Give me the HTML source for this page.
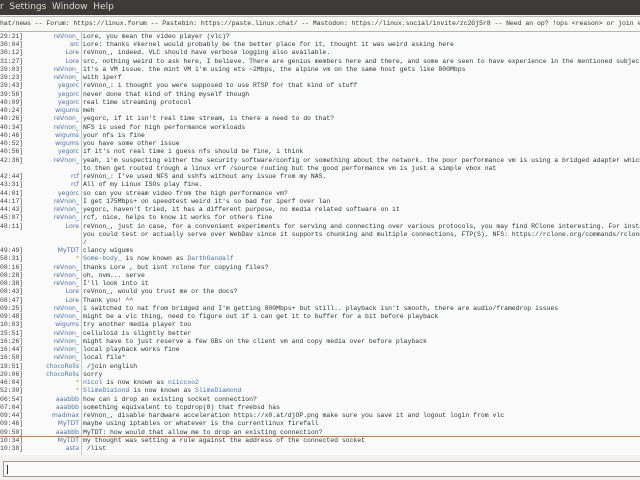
<!DOCTYPE html>
<html><head><meta charset="utf-8"><style>
*{margin:0;padding:0;box-sizing:border-box}
body{width:640px;height:480px;overflow:hidden;background:#f2f1f0;position:relative;font-family:"Liberation Mono","DejaVu Sans Mono",monospace}
#menu{position:absolute;left:0;top:0;width:640px;height:15px;background:#3c3b37;color:#dfdbd2;font-family:"DejaVu Sans","Liberation Sans",sans-serif;font-size:9px;line-height:15px;white-space:pre}
#topic{position:absolute;left:0;top:16px;width:640px;height:16px;background:#f7f7f6;border-top:1px solid #b8b6b2;border-bottom:1px solid #b8b6b2;font-size:6.45px;line-height:14px;color:#2e3436;white-space:pre;overflow:hidden}
#chat{position:absolute;left:0;top:32px;width:640px;height:423px;background:#fafafa;overflow:hidden}
#sep{position:absolute;left:81px;top:0;width:1px;height:423px;background:#c8c8c8}
.l{position:absolute;left:0;height:8.24px;width:640px;font-size:6.45px;line-height:8.24px;white-space:pre;color:#2e3436}
.t{position:absolute;left:0;color:#444}
.n{position:absolute;right:561px;color:#4a72a8;font-family:"DejaVu Sans","Liberation Sans",sans-serif;font-size:6.2px}
.m{position:absolute;left:83px}
.b{color:#4a72a8}
.s{color:#e0a030}
#marker{position:absolute;left:0;top:403.5px;width:640px;height:1px;background:#c87c4c}
#input{position:absolute;left:3px;top:461px;width:640px;height:16px;background:#fafafa;border:1px solid #9a9a96}
#cur{position:absolute;left:3px;top:3px;width:1px;height:9px;background:#333}
</style></head><body>
<div id="menu">r  Settings  Window  Help</div>
<div id="topic">hat/news -- Forum: https://linux.forum -- Pastebin: https://paste.linux.chat/ -- Mastodon: https://linux.social/invite/zc2Gj5r8 -- Need an op? !ops &lt;reason&gt; or join #linux-ops</div>
<div id="chat">
<div id="sep"></div>
<div class="l" style="top:1px"><span class="t">29:21]</span><span class="n">reVnon_</span><span class="m">Lore, you mean the video player (vlc)?</span></div>
<div class="l" style="top:9.24px"><span class="t">30:04]</span><span class="n">src</span><span class="m">Lore: thanks #kernel would probably be the better place for it, thought it was weird asking here</span></div>
<div class="l" style="top:17.48px"><span class="t">30:12]</span><span class="n">Lore</span><span class="m">reVnon_, indeed. VLC should have verbose logging also available.</span></div>
<div class="l" style="top:25.72px"><span class="t">31:27]</span><span class="n">Lore</span><span class="m">src, nothing weird to ask here, I believe. There are genius members here and there, and some are seen to have experience in the mentioned subjects</span></div>
<div class="l" style="top:33.96px"><span class="t">39:03]</span><span class="n">reVnon_</span><span class="m">it's a VM issue. the mint VM i'm using ets ~2Mbps, the alpine vm on the same host gets like 800Mbps</span></div>
<div class="l" style="top:42.2px"><span class="t">39:23]</span><span class="n">reVnon_</span><span class="m">with iperf</span></div>
<div class="l" style="top:50.44px"><span class="t">39:43]</span><span class="n">yegorc</span><span class="m">reVnon_: i thought you were supposed to use RTSP for that kind of stuff</span></div>
<div class="l" style="top:58.68px"><span class="t">39:56]</span><span class="n">yegorc</span><span class="m">never done that kind of thing myself though</span></div>
<div class="l" style="top:66.92px"><span class="t">40:09]</span><span class="n">yegorc</span><span class="m">real time streaming protocol</span></div>
<div class="l" style="top:75.16px"><span class="t">40:24]</span><span class="n">wigums</span><span class="m">meh</span></div>
<div class="l" style="top:83.4px"><span class="t">40:26]</span><span class="n">reVnon_</span><span class="m">yegorc, if it isn't real time stream, is there a need to do that?</span></div>
<div class="l" style="top:91.64px"><span class="t">40:34]</span><span class="n">reVnon_</span><span class="m">NFS is used for high performance workloads</span></div>
<div class="l" style="top:99.88px"><span class="t">40:46]</span><span class="n">wigums</span><span class="m">your nfs is fine</span></div>
<div class="l" style="top:108.12px"><span class="t">40:52]</span><span class="n">wigums</span><span class="m">you have some other issue</span></div>
<div class="l" style="top:116.36px"><span class="t">40:56]</span><span class="n">yegorc</span><span class="m">if it's not real time i guess nfs should be fine, i think</span></div>
<div class="l" style="top:124.6px"><span class="t">42:36]</span><span class="n">reVnon_</span><span class="m">yeah, i'm suspecting either the security software/config or something about the network. the poor performance vm is using a bridged adapter which</span></div>
<div class="l" style="top:132.84px"><span class="m">to then get routed trough a linux vrf /source routing but the good performance vm is just a simple vbox nat</span></div>
<div class="l" style="top:141.08px"><span class="t">42:44]</span><span class="n">rcf</span><span class="m">reVnon_: I've used NFS and sshfs without any issue from my NAS.</span></div>
<div class="l" style="top:149.32px"><span class="t">43:31]</span><span class="n">rcf</span><span class="m">All of my Linux ISOs play fine.</span></div>
<div class="l" style="top:157.56px"><span class="t">44:01]</span><span class="n">yegorc</span><span class="m">so can you stream video from the high performance vm?</span></div>
<div class="l" style="top:165.8px"><span class="t">44:17]</span><span class="n">reVnon_</span><span class="m">I get 175Mbps+ on speedtest weird it's so bad for iperf over lan</span></div>
<div class="l" style="top:174.04px"><span class="t">44:43]</span><span class="n">reVnon_</span><span class="m">yegorc, haven't tried, it has a different purpose, no media related software on it</span></div>
<div class="l" style="top:182.28px"><span class="t">45:07]</span><span class="n">reVnon_</span><span class="m">rcf, nice, helps to know it works for others fine</span></div>
<div class="l" style="top:190.52px"><span class="t">48:11]</span><span class="n">Lore</span><span class="m">reVnon_, just in case, for a convenient experiments for serving and connecting over various protocols, you may find RClone interesting. For instance</span></div>
<div class="l" style="top:198.76px"><span class="m">you could test or actually serve over WebDav since it supports chunking and multiple connections, FTP(S), NFS: https://rclone.org/commands/rclone_serve</span></div>
<div class="l" style="top:207px"><span class="m">/</span></div>
<div class="l" style="top:215.24px"><span class="t">49:49]</span><span class="n">MyTDT</span><span class="m">clancy wigums</span></div>
<div class="l" style="top:223.48px"><span class="t">58:31]</span><span class="n s">*</span><span class="m"><span class="b">Some-body_</span> is now known as <span class="b">DarthGandalf</span></span></div>
<div class="l" style="top:231.72px"><span class="t">08:16]</span><span class="n">reVnon_</span><span class="m">thanks Lore , but isnt rclone for copying files?</span></div>
<div class="l" style="top:239.96px"><span class="t">08:28]</span><span class="n">reVnon_</span><span class="m">oh, nvm... serve</span></div>
<div class="l" style="top:248.2px"><span class="t">08:38]</span><span class="n">reVnon_</span><span class="m">I'll look into it</span></div>
<div class="l" style="top:256.44px"><span class="t">08:43]</span><span class="n">Lore</span><span class="m">reVnon_, would you trust me or the docs?</span></div>
<div class="l" style="top:264.68px"><span class="t">08:47]</span><span class="n">Lore</span><span class="m">Thank you! ^^</span></div>
<div class="l" style="top:272.92px"><span class="t">09:25]</span><span class="n">reVnon_</span><span class="m">i switched to nat from bridged and I'm getting 800Mbps+ but still.. playback isn't smooth, there are audio/framedrop issues</span></div>
<div class="l" style="top:281.16px"><span class="t">09:48]</span><span class="n">reVnon_</span><span class="m">might be a vlc thing, need to figure out if i can get it to buffer for a bit before playback</span></div>
<div class="l" style="top:289.4px"><span class="t">10:03]</span><span class="n">wigums</span><span class="m">try another media player too</span></div>
<div class="l" style="top:297.64px"><span class="t">15:51]</span><span class="n">reVnon_</span><span class="m">celluloid is slightly better</span></div>
<div class="l" style="top:305.88px"><span class="t">16:26]</span><span class="n">reVnon_</span><span class="m">might have to just reserve a few GBs on the client vm and copy media over before playback</span></div>
<div class="l" style="top:314.12px"><span class="t">16:44]</span><span class="n">reVnon_</span><span class="m">local playback works fine</span></div>
<div class="l" style="top:322.36px"><span class="t">16:50]</span><span class="n">reVnon_</span><span class="m">local file*</span></div>
<div class="l" style="top:330.6px"><span class="t">19:51]</span><span class="n">chocoRolis</span><span class="m"> /join english</span></div>
<div class="l" style="top:338.84px"><span class="t">20:06]</span><span class="n">chocoRolis</span><span class="m">sorry</span></div>
<div class="l" style="top:347.08px"><span class="t">46:04]</span><span class="n s">*</span><span class="m"><span class="b">nicol</span> is now known as <span class="b">niiccoo2</span></span></div>
<div class="l" style="top:355.32px"><span class="t">52:30]</span><span class="n s">*</span><span class="m"><span class="b">SlimeDia1ond</span> is now known as <span class="b">SlimeDiamond</span></span></div>
<div class="l" style="top:363.56px"><span class="t">06:54]</span><span class="n">aaabbb</span><span class="m">how can i drop an existing socket connection?</span></div>
<div class="l" style="top:371.8px"><span class="t">07:04]</span><span class="n">aaabbb</span><span class="m">something equivalent to tcpdrop(8) that freebsd has</span></div>
<div class="l" style="top:380.04px"><span class="t">09:44]</span><span class="n">madmax</span><span class="m">reVnon_, disable hardware acceleration https://x0.at/djOP.png make sure you save it and logout login from vlc</span></div>
<div class="l" style="top:388.28px"><span class="t">09:46]</span><span class="n">MyTDT</span><span class="m">maybe using iptables or whatever is the currentlinux firefall</span></div>
<div class="l" style="top:396.52px"><span class="t">09:50]</span><span class="n">aaabbb</span><span class="m">MyTDT: how would that allow me to drop an existing connection?</span></div>
<div id="marker"></div>
<div class="l" style="top:404.76px"><span class="t">10:34]</span><span class="n">MyTDT</span><span class="m">my thought was setting a rule against the address of the connected socket</span></div>
<div class="l" style="top:413px"><span class="t">10:38]</span><span class="n">asta</span><span class="m"> /list</span></div>
</div>
<div id="input"><div id="cur"></div></div>
</body></html>
